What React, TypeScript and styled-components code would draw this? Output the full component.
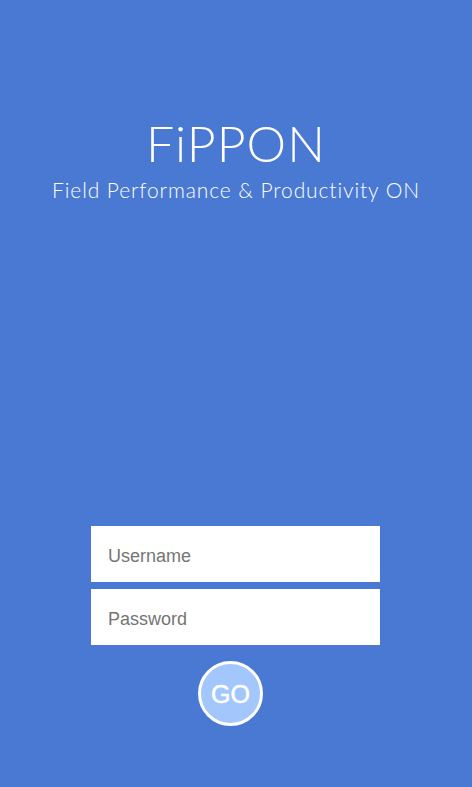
import styled, {createGlobalStyle} from "styled-components";

const GlobalStyle = createGlobalStyle`
  html, body {
    margin: 0;
    padding: 0;
    background: #4a79d4;
  }
  * {
    box-sizing: border-box;
  }
`

export default function App() {
    return (
        <>
            <GlobalStyle/>
            <Page>
                <Header>
                    <Title>FiPPON</Title>
                    <Subtitle>Field Performance &amp; Productivity ON</Subtitle>
                </Header>
                <LoginForm onSubmit={e => e.preventDefault()}>
                    <Field type="text" placeholder="Username"/>
                    <Field type="password" placeholder="Password"/>
                    <GoButton type="submit">GO</GoButton>
                </LoginForm>
            </Page>
        </>
    )
}

const Page = styled.div`
  display: flex;
  flex-direction: column;
  justify-content: space-between;
  align-items: center;
  height: 787px;
  width: 472px;
  background: #4a79d4;
  padding: 114px 0 61px;
`

const Header = styled.header`
  display: flex;
  flex-direction: column;
  align-items: center;
  color: #ffffff;
  font-family: Lato, "Open Sans", sans-serif;
`

const Title = styled.h1`
  margin: 0;
  font-size: 50px;
  font-weight: 300;
  line-height: 58px;
  letter-spacing: 1px;
`

const Subtitle = styled.p`
  margin: 5px 0 0;
  font-size: 21px;
  font-weight: 300;
  line-height: 26px;
  letter-spacing: 0.9px;
`

const LoginForm = styled.form`
  display: flex;
  flex-direction: column;
  align-items: center;
  gap: 7px;
  width: 289px;
  margin-right: 1px;
`

const Field = styled.input`
  width: 100%;
  height: 56px;
  border: none;
  outline: none;
  background: #ffffff;
  padding: 4px 17px 0;
  font-family: "Liberation Sans", Arial, sans-serif;
  font-size: 18px;
  color: #333;

  &::placeholder {
    color: #757575;
  }
`

const GoButton = styled.button`
  display: flex;
  align-items: center;
  justify-content: center;
  width: 65px;
  height: 65px;
  margin: 9px 10px 0 0;
  border-radius: 50%;
  border: 3px solid #ffffff;
  background: #a3c7fd;
  color: #ffffff;
  font-family: "Liberation Sans", Arial, sans-serif;
  font-size: 25px;
  -webkit-text-stroke: 0.5px #ffffff;
  padding: 2px 0 0;
  cursor: pointer;
`
